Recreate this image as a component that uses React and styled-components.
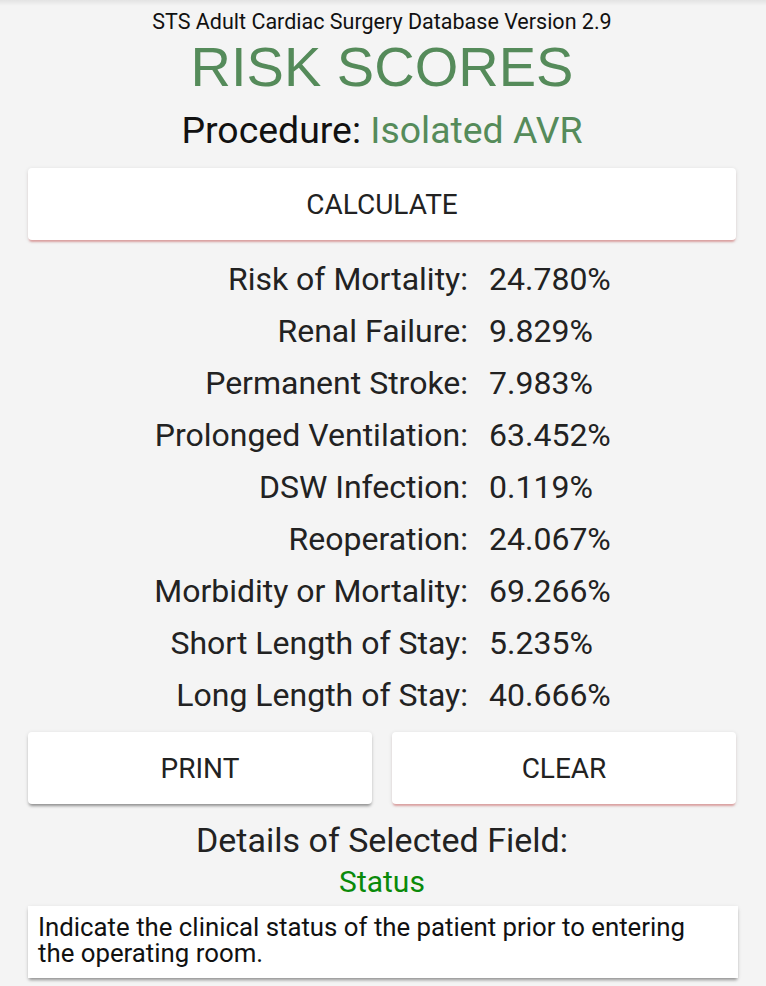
import React from "react";
import styled, { createGlobalStyle } from "styled-components";

const GlobalStyle = createGlobalStyle`
  html, body { margin: 0; padding: 0; background: #f4f4f4; }
  body { font-family: Roboto, "Noto Sans", sans-serif; color: #212121; }
  * { box-sizing: border-box; }
`;

const Page = styled.div`
  width: 766px;
  min-height: 986px;
  background: #f4f4f4;
  position: relative;
  padding: 0 30px 0 28px;
  display: flex;
  flex-direction: column;
  align-items: stretch;
  &::before {
    content: "";
    position: absolute;
    left: 0; right: 0; top: 0;
    height: 6px;
    background: linear-gradient(to bottom, rgba(0,0,0,0.07), rgba(0,0,0,0));
  }
`;

const Version = styled.div`
  text-align: center;
  font-size: 21.5px;
  line-height: 26px;
  margin-top: 9px;
  color: #111;
`;

const Title = styled.h1`
  margin: 0;
  text-align: center;
  font-family: "Liberation Sans", Arial, sans-serif;
  font-weight: 400;
  font-size: 56px;
  line-height: 64px;
  color: #558b5a;
`;

const Procedure = styled.div`
  text-align: center;
  font-size: 37.4px;
  line-height: 48px;
  color: #111;
  margin-top: 7px;
`;

const Green = styled.span`
  color: ${(p) => p.$color || "#558b5a"};
`;

const Button = styled.button`
  display: flex;
  align-items: center;
  justify-content: center;
  height: 72px;
  width: 100%;
  border: none;
  border-radius: 4px;
  background: #fff;
  font-family: Roboto, sans-serif;
  font-size: 28px;
  color: #222;
  box-shadow: ${(p) =>
    p.$accent
      ? "0 3px 2px -1px rgba(215,120,120,0.6), 0 1px 4px rgba(0,0,0,0.12)"
      : "0 3px 3px -1px rgba(0,0,0,0.35), 0 1px 4px rgba(0,0,0,0.12)"};
  cursor: pointer;
`;

const CalcWrap = styled.div`
  margin-top: 14px;
`;

const Scores = styled.div`
  display: grid;
  grid-template-columns: 440px 1fr;
  column-gap: 21px;
  margin-top: 13px;
`;

const Label = styled.div`
  text-align: right;
  font-size: 32px;
  line-height: 52px;
  color: #222;
  white-space: nowrap;
`;

const Value = styled.div`
  text-align: left;
  font-size: 32px;
  line-height: 52px;
  color: #222;
`;

const ButtonRow = styled.div`
  display: grid;
  grid-template-columns: 1fr 1fr;
  column-gap: 20px;
  margin-top: 11px;
`;

const DetailsTitle = styled.div`
  text-align: center;
  font-size: 34px;
  line-height: 40px;
  margin-top: 16px;
  color: #222;
`;

const FieldName = styled.div`
  text-align: center;
  font-size: 30px;
  line-height: 40px;
  color: #0a8a0a;
  margin-top: 2px;
`;

const Description = styled.div`
  background: #fff;
  margin-top: 4px;
  margin-right: -2px;
  padding: 8px 40px 12px 10px;
  font-size: 25.8px;
  line-height: 26px;
  color: #111;
  box-shadow: 0 3px 3px -1px rgba(0,0,0,0.35), 0 1px 4px rgba(0,0,0,0.1);
`;

const scores = [
  ["Risk of Mortality:", "24.780%"],
  ["Renal Failure:", "9.829%"],
  ["Permanent Stroke:", "7.983%"],
  ["Prolonged Ventilation:", "63.452%"],
  ["DSW Infection:", "0.119%"],
  ["Reoperation:", "24.067%"],
  ["Morbidity or Mortality:", "69.266%"],
  ["Short Length of Stay:", "5.235%"],
  ["Long Length of Stay:", "40.666%"],
];

export default function App() {
  return (
    <>
      <GlobalStyle />
      <Page>
        <Version>STS Adult Cardiac Surgery Database Version 2.9</Version>
        <Title>RISK SCORES</Title>
        <Procedure>
          Procedure: <Green>Isolated AVR</Green>
        </Procedure>
        <CalcWrap>
          <Button $accent>CALCULATE</Button>
        </CalcWrap>
        <Scores>
          {scores.map(([l, v]) => (
            <React.Fragment key={l}>
              <Label>{l}</Label>
              <Value>{v}</Value>
            </React.Fragment>
          ))}
        </Scores>
        <ButtonRow>
          <Button>PRINT</Button>
          <Button $accent>CLEAR</Button>
        </ButtonRow>
        <DetailsTitle>Details of Selected Field:</DetailsTitle>
        <FieldName>Status</FieldName>
        <Description>
          Indicate the clinical status of the patient prior to entering the operating room.
        </Description>
      </Page>
    </>
  );
}
